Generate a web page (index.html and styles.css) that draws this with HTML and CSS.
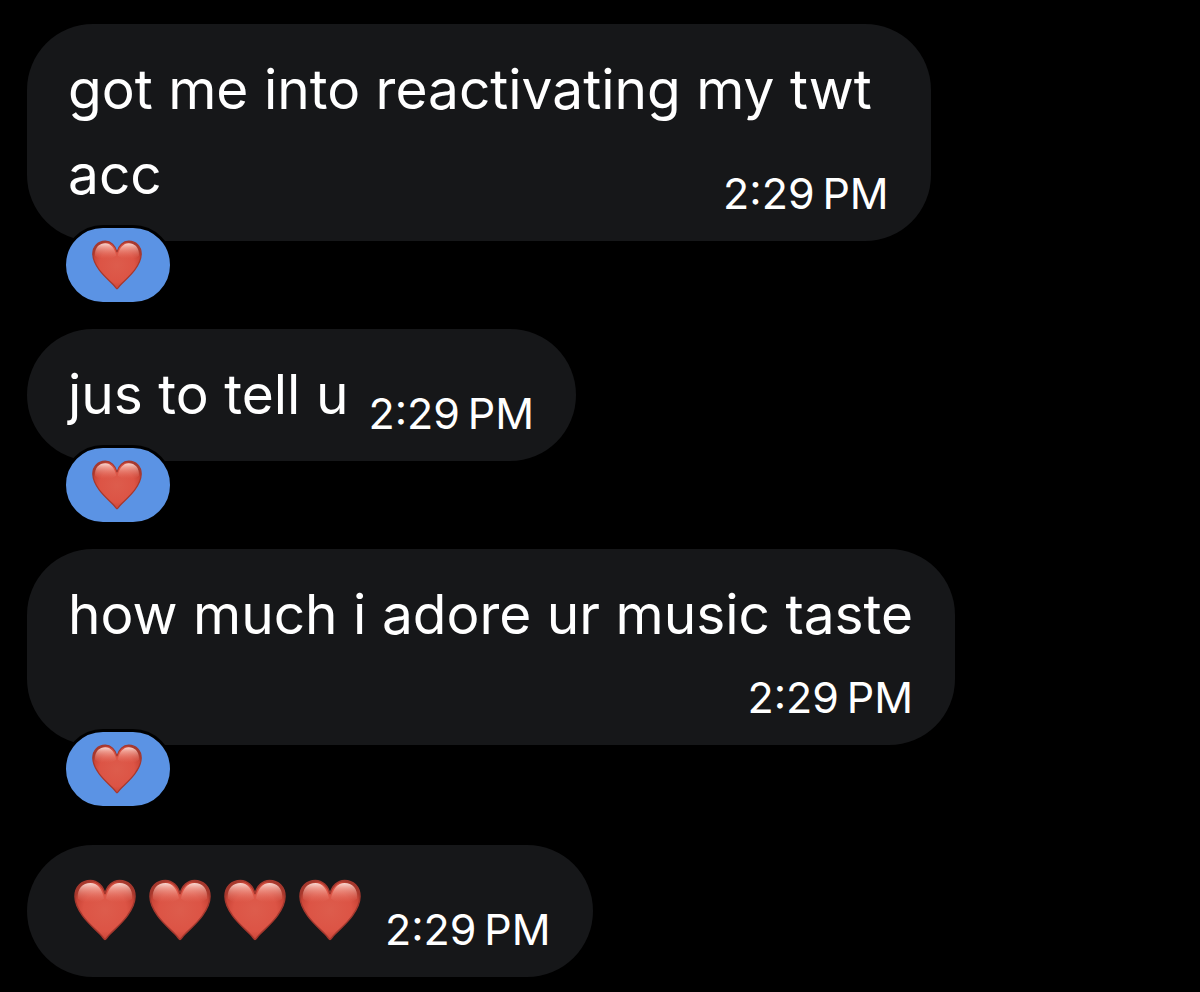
FILE: index.html
```html
<!DOCTYPE html>
<html lang="en">
<head>
<meta charset="utf-8">
<meta name="viewport" content="width=device-width, initial-scale=1">
<title>Chat</title>
<link rel="stylesheet" href="styles.css">
</head>
<body>
<svg class="defs" aria-hidden="true">
  <defs>
    <radialGradient id="fill" cx="32" cy="32" r="34" gradientUnits="userSpaceOnUse">
      <stop offset="0" stop-color="#dd5c4c"/>
      <stop offset="0.65" stop-color="#dc5445"/>
      <stop offset="0.88" stop-color="#cc4638"/>
      <stop offset="1" stop-color="#a8382c"/>
    </radialGradient>
    <linearGradient id="shine" x1="0" y1="3" x2="0" y2="24" gradientUnits="userSpaceOnUse">
      <stop offset="0" stop-color="#fff0ec" stop-opacity="0.95"/>
      <stop offset="0.3" stop-color="#f8b8ac" stop-opacity="0.75"/>
      <stop offset="1" stop-color="#e87868" stop-opacity="0"/>
    </linearGradient>
    <symbol id="heart" viewBox="0 0 64 64">
      <path fill="url(#fill)" stroke="#a5382e" stroke-width="1.5" d="M32 62.5C31 62.5 30 60 27 57C21 51 14 45 9 38C4 31 1 25 1 18C1 8 8 1.500 17 1.500C24 1.500 30 7 32 15.500C34 7 40 1.500 47 1.500C56 1.500 63 8 63 18C63 25 60 31 55 38C50 45 43 51 37 57C34 60 33 62.500 32 62.500Z"/>
      <path fill="url(#shine)" d="M4 20C3 10 9 4 17 4C24 4 29 10 31 20C24 26 10 27 4 20ZM60 20C61 10 55 4 47 4C40 4 35 10 33 20C40 26 54 27 60 20Z"/>
    </symbol>
  </defs>
</svg>
<main class="chat">
  <article class="bubble overlap">
    <p class="text">got me into reactivating my twt<br>acc</p>
    <time class="time">2:29&#8239;PM</time>
    <button class="reaction" type="button" aria-label="Heart reaction"><svg class="small-heart"><use href="#heart"/></svg></button>
  </article>
  <article class="bubble inline">
    <p class="text">jus to tell u</p>
    <time class="time">2:29&#8239;PM</time>
    <button class="reaction" type="button" aria-label="Heart reaction"><svg class="small-heart"><use href="#heart"/></svg></button>
  </article>
  <article class="bubble stacked">
    <p class="text">how much i adore ur music taste</p>
    <time class="time">2:29&#8239;PM</time>
    <button class="reaction" type="button" aria-label="Heart reaction"><svg class="small-heart"><use href="#heart"/></svg></button>
  </article>
  <article class="bubble inline last">
    <div class="hearts" role="img" aria-label="Four red hearts">
      <svg class="heart"><use href="#heart"/></svg>
      <svg class="heart"><use href="#heart"/></svg>
      <svg class="heart"><use href="#heart"/></svg>
      <svg class="heart"><use href="#heart"/></svg>
    </div>
    <time class="time">2:29&#8239;PM</time>
  </article>
</main>
</body>
</html>
```
FILE: styles.css
```css
* { box-sizing: border-box; }

body {
  margin: 0;
  background: #000;
  color: #fff;
  font-family: Inter, "Liberation Sans", sans-serif;
}

.defs {
  position: absolute;
  width: 0;
  height: 0;
}

.chat {
  display: flex;
  flex-direction: column;
  align-items: flex-start;
  gap: 88px;
  padding: 24px 27px 14px;
}

.bubble {
  position: relative;
  max-width: 100%;
  padding: 23px 42px 21px 41px;
  border-radius: 66px;
  background: #161719;
}

.text {
  margin: 0;
  padding-bottom: 3px;
  font-size: 55px;
  line-height: 85px;
}

.time {
  font-size: 43px;
  line-height: 54px;
  white-space: nowrap;
}

.overlap { display: grid; }

.overlap .text,
.overlap .time { grid-area: 1 / 1; }

.overlap .text { padding-right: 17px; }

.overlap .time { place-self: end; }

.inline {
  display: flex;
  align-items: flex-end;
  gap: 20px;
}

.stacked {
  display: flex;
  flex-direction: column;
  gap: 10px;
}

.stacked .time { align-self: flex-end; }

.last { margin-top: 12px; }

.reaction {
  position: absolute;
  left: 36px;
  bottom: -64px;
  display: grid;
  place-items: center;
  width: 110px;
  height: 80px;
  padding: 0 2px 0 0;
  border: 3px solid #000;
  border-radius: 40px;
  background: #5b93e4;
}

.small-heart {
  width: 50px;
  height: 50px;
}

.hearts {
  display: flex;
  gap: 13px;
  padding: 11px 4px 15px 6px;
}

.heart {
  width: 62px;
  height: 62px;
}
```
